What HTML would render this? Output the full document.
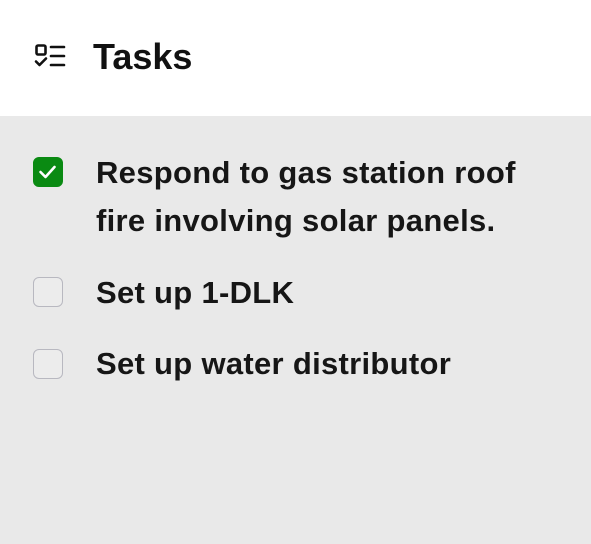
<!DOCTYPE html>
<html><head><style>
*{margin:0;padding:0;box-sizing:border-box}
body{width:591px;height:544px;background:#e9e9e9;font-family:"Liberation Sans",sans-serif;color:#111;overflow:hidden;position:relative}
.hdr{position:absolute;left:0;top:0;width:591px;height:116px;background:#fff}
.title{position:absolute;left:93px;top:36px;font-size:36px;font-weight:bold;line-height:42px}
.cb{position:absolute;left:33px;width:30px;height:30px;border-radius:6px;border:1.5px solid #b8b8c0;background:#ececec}
.cb.on{background:#0a8a12;border-color:#0a8a12}
.t{position:absolute;left:96px;font-size:31px;line-height:48px;font-weight:bold;letter-spacing:0.3px;color:#161616}
</style></head><body>
<div class="hdr">
<svg style="position:absolute;left:33px;top:43px" width="34" height="28" viewBox="0 0 34 28" fill="none" stroke="#111" stroke-width="2.6" stroke-linecap="round" stroke-linejoin="round">
<rect x="3.5" y="2.5" width="9" height="9" rx="1.5"/>
<path d="M3 18.5l3.5 3.5 6.5-6.5"/>
<path d="M18 4h13M18 13h13M18 22h13"/>
</svg>
<div class="title">Tasks</div>
</div>
<div class="cb on" style="top:157px">
<svg width="27" height="27" viewBox="0 0 27 27" fill="none" stroke="#fff" stroke-width="2.6" stroke-linecap="round" stroke-linejoin="round"><path d="M6.5 14l5 5 9-10"/></svg>
</div>
<div class="t" style="top:149px">Respond to gas station roof<br>fire involving solar panels.</div>
<div class="cb" style="top:277px"></div>
<div class="t" style="top:269px">Set up 1-DLK</div>
<div class="cb" style="top:349px"></div>
<div class="t" style="top:340px">Set up water distributor</div>
</body></html>
